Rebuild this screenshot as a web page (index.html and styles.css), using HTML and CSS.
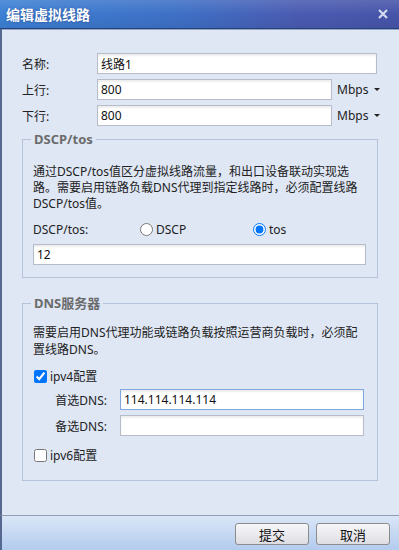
FILE: index.html
```html
<!DOCTYPE html>
<html>
<head>
    <meta charset="utf-8">
    <title>编辑虚拟线路</title>
    <link rel="stylesheet" href="styles.css">
</head>
<body>
    <div class="dialog">
        <div class="titlebar">
            <span class="title">编辑虚拟线路</span>
            <svg class="close" width="10" height="10" viewBox="0 0 10 10"><path d="M1 1L9 9M9 1L1 9" stroke="#d4dbf1" stroke-width="2.2"/></svg>
        </div>
        <div class="main">
            <div class="row">
                <label class="lbl">名称:</label>
                <input class="txt" value="线路1">
            </div>
            <div class="row">
                <label class="lbl">上行:</label>
                <input class="txt" value="800">
                <span class="unit">Mbps<i class="caret"></i></span>
            </div>
            <div class="row">
                <label class="lbl">下行:</label>
                <input class="txt" value="800">
                <span class="unit">Mbps<i class="caret"></i></span>
            </div>

            <fieldset class="group">
                <legend>DSCP/tos</legend>
                <p class="note">通过DSCP/tos值区分虚拟线路流量，和出口设备联动实现选<br>路。需要启用链路负载DNS代理到指定线路时，必须配置线路<br>DSCP/tos值。</p>
                <div class="radios">
                    <span class="rlbl">DSCP/tos:</span>
                    <label class="opt opt-dscp"><input type="radio" name="mode">DSCP</label>
                    <label class="opt"><input type="radio" name="mode" checked>tos</label>
                </div>
                <input class="txt wide" value="12">
            </fieldset>

            <fieldset class="group dns">
                <legend>DNS服务器</legend>
                <p class="note note-dns">需要启用DNS代理功能或链路负载按照运营商负载时，必须配<br>置线路DNS。</p>
                <label class="check"><input type="checkbox" checked>ipv4配置</label>
                <div class="dns-row">
                    <span class="dns-lbl">首选DNS:</span>
                    <input class="txt focus" value="114.114.114.114">
                </div>
                <div class="dns-row">
                    <span class="dns-lbl">备选DNS:</span>
                    <input class="txt" value="">
                </div>
                <label class="check check-v6"><input type="checkbox">ipv6配置</label>
            </fieldset>
        </div>
        <div class="footer">
            <button class="btn">提交</button>
            <button class="btn">取消</button>
        </div>
    </div>
</body>
</html>
```

FILE: styles.css
```css
body {
    margin: 0;
    background-color: #dfe7f5;
    font-family: "Noto Sans", "Noto Sans CJK SC", sans-serif;
    font-size: 12px;
    color: #222;
}
.dialog {
    width: 399px;
    height: 550px;
    display: flex;
    flex-direction: column;
}
.titlebar {
    height: 28px;
    flex: none;
    display: flex;
    align-items: center;
    justify-content: space-between;
    padding: 0 11px 0 6px;
    background: linear-gradient(to bottom, rgba(255,255,255,0.12), rgba(255,255,255,0) 50%, rgba(0,0,0,0.06)),
                linear-gradient(to right, #3c80d4 0%, #3e70c6 45%, #4a5bb1 75%, #4754a9 100%);
    border-bottom: 1px solid #23427c;
    box-shadow: 0 1px 0 #97a6c2;
}
.title {
    color: #fff;
    font-family: "Noto Sans CJK SC", sans-serif;
    font-weight: bold;
    font-size: 14px;
    text-shadow: 0 0 2px rgba(20, 40, 100, 0.6);
}
.main {
    flex: 1;
    border-left: 2px solid #56688f;
    padding: 24px 21px 0 20px;
}
.row {
    display: flex;
    align-items: center;
    height: 21px;
    margin-right: 1px;
}
.row + .row {
    margin-top: 5px;
}
.lbl {
    width: 75px;
    flex: none;
}
.txt {
    box-sizing: border-box;
    height: 21px;
    border: 1px solid #b7bdc8;
    padding: 0 3px;
    font-family: "Noto Sans", "Noto Sans CJK SC", sans-serif;
    font-size: 12px;
    color: #111;
    background: #fff;
    box-shadow: inset 0 2px 2px rgba(0, 0, 0, 0.07);
    outline: none;
    min-width: 0;
}
.row .txt {
    flex: 1;
}
.txt.focus {
    border-color: #80a8dc;
}
.unit {
    width: 40px;
    flex: none;
    padding-left: 5px;
    display: flex;
    align-items: center;
}
.caret {
    margin-left: 6px;
    width: 0;
    height: 0;
    border-left: 3px solid transparent;
    border-right: 3px solid transparent;
    border-top: 3px solid #222;
}
.group {
    margin: 5px 0 0;
    border: 1px solid #b6c4da;
    padding: 0 11px 12px 10px;
    min-width: 0;
}
.group legend {
    margin-left: -2px;
    padding: 0 3px;
    font-family: "Noto Sans", "Noto Sans CJK SC", sans-serif;
    font-weight: bold;
    font-size: 13px;
    line-height: 16px;
    color: #6b6b6b;
}
.note {
    margin: 17px 0 0;
    line-height: 16px;
    white-space: nowrap;
}
.radios {
    display: flex;
    align-items: center;
    height: 16px;
    margin-top: 9px;
}
.rlbl {
    width: 107px;
}
.opt {
    display: flex;
    align-items: center;
}
.opt-dscp {
    width: 113px;
}
.opt input {
    width: 13px;
    height: 13px;
    margin: 0 3px 0 0;
}
.wide {
    display: block;
    width: 100%;
    margin-top: 7px;
}
.dns {
    margin-top: 17px;
    padding-bottom: 17px;
}
.note-dns {
    margin-top: 13px;
    line-height: 17px;
}
.check {
    display: flex;
    align-items: center;
    height: 16px;
    margin-top: 10px;
    padding-left: 1px;
}
.check input {
    width: 13px;
    height: 13px;
    margin: 0 3px 0 0;
}
.check-v6 {
    margin-top: 11px;
}
.dns-row {
    display: flex;
    align-items: center;
    margin-top: 5px;
}
.dns-lbl {
    width: 74px;
    flex: none;
    text-align: right;
    margin-right: 13px;
}
.dns-row .txt {
    flex: 1;
    margin-right: 2px;
}
.footer {
    height: 34px;
    flex: none;
    border-top: 1px solid #8e9cb4;
    border-left: 2px solid #56688f;
    background: linear-gradient(#d9e6f7, #b3cbee);
    display: flex;
    justify-content: flex-end;
    align-items: flex-start;
    gap: 7px;
    padding: 7px 9px 0 0;
    box-sizing: border-box;
    height: 35px;
}
.btn {
    width: 74px;
    height: 22px;
    border: 1px solid #8c8c8c;
    border-radius: 3px;
    background: linear-gradient(#f6f6f8, #ebebef 50%, #dcdce2);
    font-family: "Noto Sans CJK SC", sans-serif;
    font-size: 13px;
    color: #111;
    padding: 0;
}
```
